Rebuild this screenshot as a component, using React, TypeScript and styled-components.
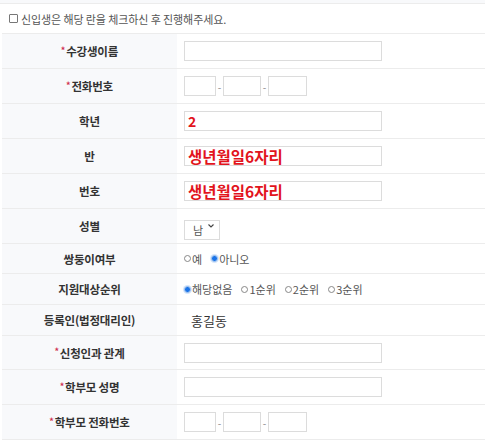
import React from "react";
import styled, { createGlobalStyle } from "styled-components";

const Global = createGlobalStyle`
  html, body { margin: 0; padding: 0; background: #fff; }
  body { font-family: "Noto Sans CJK KR", "Noto Sans", sans-serif; color: #333; }
`;

const Page = styled.div`
  width: 489px;
  padding-left: 2px;
  box-sizing: border-box;
`;

const TopStrip = styled.div`
  width: 483px;
  height: 3px;
  background: #f8f9fb;
  border-bottom: 1px solid #ececec;
  margin-left: -2px;
  padding-left: 2px;
`;

const Notice = styled.label`
  display: flex;
  align-items: center;
  gap: 3px;
  height: 29px;
  padding-left: 7px;
  font-size: 11px;
  color: #555;
  letter-spacing: -0.1px;
`;

const Box = styled.span`
  width: 7px;
  height: 7px;
  border: 1px solid #777;
  border-radius: 1px;
  display: inline-block;
`;

const Table = styled.div`
  width: 483px;
  border-top: 1px solid #ececec;
`;

const Row = styled.div<{ $h: number }>`
  display: grid;
  grid-template-columns: 175px 1fr;
  height: ${(p) => p.$h}px;
  box-sizing: border-box;
  border-bottom: 1px solid #ececec;
`;

const Label = styled.div`
  background: #f8f9fb;
  display: flex;
  align-items: center;
  justify-content: center;
  font-size: 11.5px;
  font-weight: 700;
  color: #333;
  letter-spacing: -0.2px;
`;

const Star = styled.span`
  color: #d0304f;
  font-size: 9px;
  margin-right: 1px;
  position: relative;
  top: -1px;
`;

const Cell = styled.div<{ $pad?: number }>`
  display: flex;
  align-items: center;
  padding-left: ${(p) => p.$pad ?? 7}px;
  gap: 0;
`;

const TextBox = styled.input<{ $w?: number; $size?: number }>`
  width: ${(p) => p.$w ?? 198}px;
  height: 20px;
  box-sizing: border-box;
  border: 1px solid #dcdcdc;
  padding: 0 0 0 3px;
  margin: 0;
  font-family: "Noto Sans CJK KR", sans-serif;
  font-weight: 700;
  font-size: ${(p) => p.$size ?? 13}px;
  color: #e2141c;
  outline: none;
  background: #fff;
  line-height: 18px;
`;

const Dash = styled.span`
  color: #888;
  font-size: 10px;
  width: 7px;
  text-align: center;
`;

const SelectWrap = styled.div`
  position: relative;
  width: 36px;
  height: 20px;
`;

const Select = styled.select`
  appearance: none;
  -webkit-appearance: none;
  width: 36px;
  height: 20px;
  box-sizing: border-box;
  border: 1px solid #dcdcdc;
  background: #fff;
  font-family: "Noto Sans CJK KR", sans-serif;
  font-size: 11px;
  color: #555;
  padding: 0 0 0 8px;
  margin: 0;
  outline: none;
`;

const Chevron = styled.svg`
  position: absolute;
  right: 6px;
  top: 8px;
  pointer-events: none;
`;

const RadioGroup = styled.div`
  display: flex;
  align-items: center;
  gap: 9px;
  font-size: 11px;
  color: #555;
`;

const RadioItem = styled.label`
  display: flex;
  align-items: center;
  gap: 1px;
`;

const Dot = styled.span<{ $on?: boolean }>`
  width: 7px;
  height: 7px;
  border-radius: 50%;
  box-sizing: border-box;
  display: inline-block;
  border: 1px solid ${(p) => (p.$on ? "#a9c8ee" : "#888")};
  background: ${(p) => (p.$on ? "#1a73e8" : "#fff")};
  box-shadow: ${(p) => (p.$on ? "0 0 0 1px #d6e6fb" : "none")};
`;

const Plain = styled.span`
  font-size: 13px;
  color: #333;
`;

const Phone = () => (
  <>
    <TextBox $w={32} />
    <Dash>-</Dash>
    <TextBox $w={38} />
    <Dash>-</Dash>
    <TextBox $w={39} />
  </>
);

const Radio = ({ on, children }: { on?: boolean; children: React.ReactNode }) => (
  <RadioItem>
    <Dot $on={on} />
    {children}
  </RadioItem>
);

const L = ({ req, children }: { req?: boolean; children: React.ReactNode }) => (
  <Label>
    {req && <Star>*</Star>}
    {children}
  </Label>
);

export default function App() {
  return (
    <>
      <Global />
      <Page>
        <TopStrip />
        <Notice>
          <Box />
          신입생은 해당 란을 체크하신 후 진행해주세요.
        </Notice>
        <Table>
          <Row $h={35}>
            <L req>수강생이름</L>
            <Cell><TextBox /></Cell>
          </Row>
          <Row $h={35}>
            <L req>전화번호</L>
            <Cell><Phone /></Cell>
          </Row>
          <Row $h={35}>
            <L>학년</L>
            <Cell><TextBox defaultValue="2" $size={14} /></Cell>
          </Row>
          <Row $h={35}>
            <L>반</L>
            <Cell><TextBox defaultValue="생년월일6자리" $size={15.5} /></Cell>
          </Row>
          <Row $h={35}>
            <L>번호</L>
            <Cell><TextBox defaultValue="생년월일6자리" $size={15.5} /></Cell>
          </Row>
          <Row $h={35}>
            <L>성별</L>
            <Cell>
              <SelectWrap>
                <Select defaultValue="남">
                  <option>남</option>
                  <option>여</option>
                </Select>
                <Chevron width="6" height="4" viewBox="0 0 6 4">
                  <path d="M0.5 0.5 L3 3 L5.5 0.5" fill="none" stroke="#444" strokeWidth="1.1" />
                </Chevron>
              </SelectWrap>
            </Cell>
          </Row>
          <Row $h={30}>
            <L>쌍둥이여부</L>
            <Cell>
              <RadioGroup>
                <Radio>예</Radio>
                <Radio on>아니오</Radio>
              </RadioGroup>
            </Cell>
          </Row>
          <Row $h={31}>
            <L>지원대상순위</L>
            <Cell>
              <RadioGroup>
                <Radio on>해당없음</Radio>
                <Radio>1순위</Radio>
                <Radio>2순위</Radio>
                <Radio>3순위</Radio>
              </RadioGroup>
            </Cell>
          </Row>
          <Row $h={31}>
            <L>등록인(법정대리인)</L>
            <Cell $pad={14}><Plain>홍길동</Plain></Cell>
          </Row>
          <Row $h={34}>
            <L req>신청인과 관계</L>
            <Cell><TextBox /></Cell>
          </Row>
          <Row $h={35}>
            <L req>학부모 성명</L>
            <Cell><TextBox /></Cell>
          </Row>
          <Row $h={35}>
            <L req>학부모 전화번호</L>
            <Cell><Phone /></Cell>
          </Row>
        </Table>
      </Page>
    </>
  );
}
